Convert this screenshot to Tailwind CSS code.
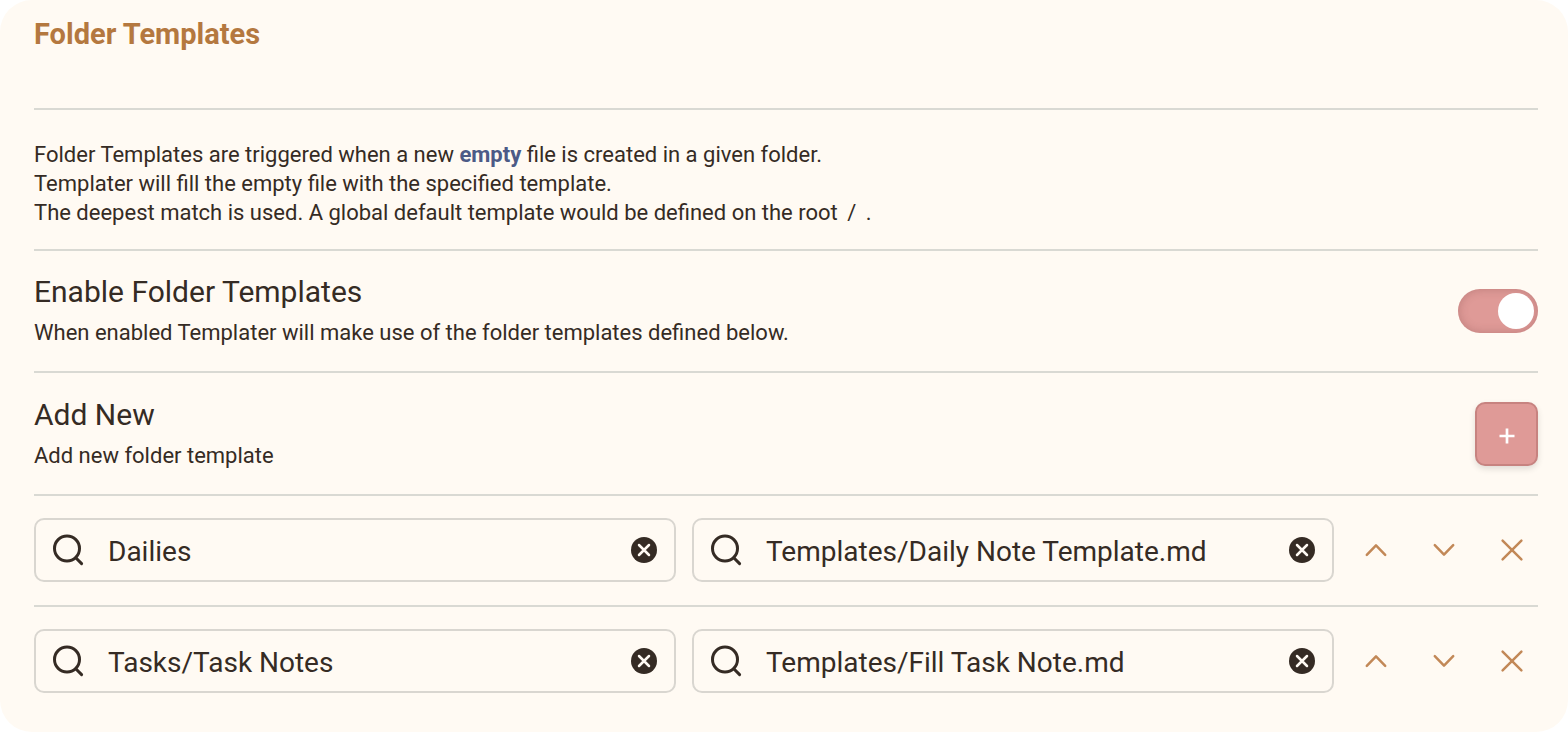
<!DOCTYPE html>
<html lang="en">
<head>
    <meta charset="UTF-8">
    <meta name="viewport" content="width=device-width, initial-scale=1.0">
    <title>Folder Templates</title>
    <script src="https://cdn.jsdelivr.net/npm/@tailwindcss/browser@4"></script>
</head>
<body class="bg-white font-['Roboto',sans-serif] text-[#352b24]">
    <main class="min-h-screen rounded-[32px] bg-[#fffaf3] pl-[34px] pr-[30px] pb-4">
        <h1 class="h-[108px] pt-4 text-[29px] leading-9 font-bold text-[#b4783f]">Folder Templates</h1>

        <section class="border-t-2 border-[#d9d9d3] pt-[30px] pb-[22px] text-[22px] leading-[29px]">
            <p>Folder Templates are triggered when a new <strong class="font-bold text-[#4c5a86]">empty</strong> file is created in a given folder.</p>
            <p>Templater will fill the empty file with the specified template.</p>
            <p>The deepest match is used. A global default template would be defined on the root <code class="px-1 font-['Roboto',sans-serif]">/</code> .</p>
        </section>

        <section class="flex items-center justify-between border-t-2 border-[#d9d9d3] py-[23px]">
            <div>
                <h2 class="text-[30px] leading-9"><label for="enableTemplates">Enable Folder Templates</label></h2>
                <p class="mt-2 text-[22px] leading-[30px]">When enabled Templater will make use of the folder templates defined below.</p>
            </div>
            <input type="checkbox" id="enableTemplates" checked class="flex h-11 w-20 shrink-0 appearance-none items-center rounded-full bg-[#df9a97] px-1 shadow-[inset_0_0_8px_1px_rgba(110,60,60,0.25)] before:h-9 before:w-9 before:rounded-full before:bg-white before:content-[''] checked:justify-end">
        </section>

        <section class="flex items-center justify-between border-t-2 border-[#d9d9d3] pt-6 pb-[23px]">
            <div>
                <h2 class="text-[30px] leading-9">Add New</h2>
                <p class="mt-2 text-[22px] leading-[30px]">Add new folder template</p>
            </div>
            <button type="button" aria-label="Add new folder template" class="flex h-16 w-[63px] shrink-0 items-center justify-center rounded-[10px] border-2 border-[#c78380] bg-[#df9a97] pt-1 text-white shadow-[0_3px_6px_rgba(0,0,0,0.12)]">
                <svg class="h-4 w-4" viewBox="0 0 16 16" fill="none" stroke="currentColor" stroke-width="2.7"><path d="M8 .5v15M.5 8h15"/></svg>
            </button>
        </section>

        <form id="folderRows"></form>
    </main>

    <script>
        const folderTemplates = [
            { folder: 'Dailies', template: 'Templates/Daily Note Template.md' },
            { folder: 'Tasks/Task Notes', template: 'Templates/Fill Task Note.md' },
        ];

        function searchField(label, value) {
            return `
                <div class="flex h-16 min-w-0 flex-1 items-center rounded-[10px] border-2 border-[#d9d6d0] px-4">
                    <svg class="h-8 w-8 shrink-0" viewBox="0 0 32 32" fill="none" stroke="currentColor" stroke-width="3" stroke-linecap="round"><circle cx="15" cy="14.5" r="12.5"/><path d="M24 24l5.6 5.6"/></svg>
                    <input type="text" aria-label="${label}" value="${value}" class="ml-6 h-10 min-w-0 flex-1 bg-transparent pt-0.5 text-[28px] leading-9 outline-none">
                    <button type="button" aria-label="Clear ${label}" class="shrink-0">
                        <svg class="h-7 w-7" viewBox="0 0 28 28"><circle cx="14" cy="14" r="13" fill="#352b24"/><path d="M9 9l10 10M19 9L9 19" stroke="#fffaf3" stroke-width="2.5" stroke-linecap="round"/></svg>
                    </button>
                </div>`;
        }

        function iconButton(label, path) {
            return `
                <button type="button" aria-label="${label}" class="flex h-13 w-13 shrink-0 items-center justify-center text-[#c28857]">
                    <svg class="h-6 w-6" viewBox="0 0 24 24" fill="none" stroke="currentColor" stroke-width="2.5" stroke-linecap="round" stroke-linejoin="round"><path d="${path}"/></svg>
                </button>`;
        }

        document.getElementById('folderRows').innerHTML = folderTemplates.map(row => `
            <div class="flex items-center gap-4 border-t-2 border-[#d9d9d3] pt-[22px] pb-[23px]">
                ${searchField('Folder', row.folder)}
                ${searchField('Template', row.template)}
                ${iconButton('Move up', 'M2.8 16.8l9.2-9.4 9.2 9.4')}
                ${iconButton('Move down', 'M2.8 7.2l9.2 9.4 9.2-9.4')}
                ${iconButton('Delete', 'M2.6 2.6l18.8 18.8M21.4 2.6L2.6 21.4')}
            </div>`).join('');
    </script>
</body>
</html>
